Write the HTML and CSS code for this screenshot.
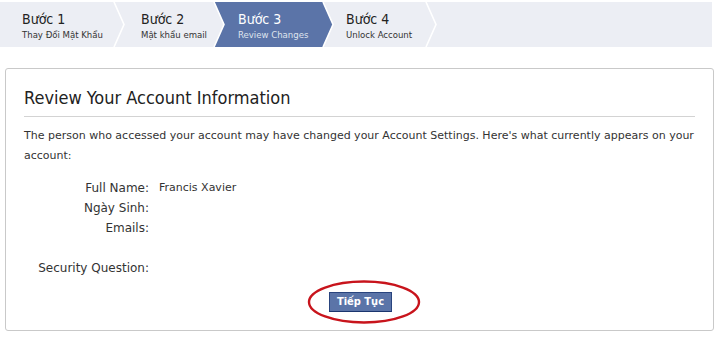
FILE: index.html
```html
<!DOCTYPE html>
<html lang="vi">
<head>
  <meta charset="UTF-8">
  <title>Review Your Account Information</title>
  <link rel="stylesheet" href="styles.css">
</head>
<body>
  <!-- Step bar -->
  <div class="steps">
    <div class="step step1">
      <div class="stepTitle">Bước 1</div>
      <div class="stepSub">Thay Đổi Mật Khẩu</div>
    </div>
    <svg class="sep" viewBox="0 0 12 45" preserveAspectRatio="none">
      <polygon class="gray" points="0,0 1,0 11,22.5 1,45 0,45"/>
      <polygon class="gray" points="1,0 12,0 12,45 1,45 11,22.5"/>
      <polyline points="1,0 11,22.5 1,45"/>
    </svg>
    <div class="step step2">
      <div class="stepTitle">Bước 2</div>
      <div class="stepSub">Mật khẩu email</div>
    </div>
    <svg class="sep" viewBox="0 0 12 45" preserveAspectRatio="none">
      <polygon class="gray" points="0,0 1,0 11,22.5 1,45 0,45"/>
      <polygon class="blue" points="1,0 12,0 12,45 1,45 11,22.5"/>
      <polyline points="1,0 11,22.5 1,45"/>
    </svg>
    <div class="step step3 active">
      <div class="stepTitle">Bước 3</div>
      <div class="stepSub">Review Changes</div>
    </div>
    <svg class="sep" viewBox="0 0 12 45" preserveAspectRatio="none">
      <polygon class="blue" points="0,0 1,0 11,22.5 1,45 0,45"/>
      <polygon class="gray" points="1,0 12,0 12,45 1,45 11,22.5"/>
      <polyline points="1,0 11,22.5 1,45"/>
    </svg>
    <div class="step step4">
      <div class="stepTitle">Bước 4</div>
      <div class="stepSub">Unlock Account</div>
    </div>
    <svg class="sep" viewBox="0 0 12 45" preserveAspectRatio="none">
      <polygon class="gray" points="0,0 1,0 11,22.5 1,45 0,45"/>
      <polygon class="gray" points="1,0 12,0 12,45 1,45 11,22.5"/>
      <polyline points="1,0 11,22.5 1,45"/>
    </svg>
    <div class="step rest"></div>
  </div>

  <!-- Review box -->
  <div class="card">
    <h2 class="cardTitle">Review Your Account Information</h2>
    <p class="intro">The person who accessed your account may have changed your Account Settings. Here's what currently appears on your account:</p>

    <div class="fields">
      <div class="label">Full Name:</div><div class="value">Francis Xavier</div>
      <div class="label">Ngày Sinh:</div><div class="value"></div>
      <div class="label">Emails:</div><div class="value"></div>
      <div class="label"></div><div class="value"></div>
      <div class="label">Security Question:</div><div class="value"></div>
    </div>

    <div class="actions">
      <button class="btn">Tiếp Tục</button>
      <svg class="circle" viewBox="0 0 114 44">
        <ellipse cx="57" cy="22" rx="55" ry="20.5"/>
      </svg>
    </div>
  </div>
</body>
</html>
```

FILE: styles.css
```css
* { box-sizing: border-box; margin: 0; padding: 0; }
html, body {
  width: 720px;
  height: 338px;
  background: #fff;
  font-family: "DejaVu Sans", sans-serif;
  color: #333;
  overflow: hidden;
}

/* Step bar */
.steps {
  display: flex;
  width: 712px;
  height: 45px;
  margin-top: 2px;
  background: #eceef4;
  font-family: "DejaVu Sans Condensed", "DejaVu Sans", sans-serif;
}
.step {
  height: 45px;
  padding-top: 9px;
  color: #222;
}
.step1 { width: 113px; padding-left: 22px; }
.step2 { width: 88px; padding-left: 16px; }
.step3 { width: 97px; padding-left: 13px; }
.step4 { width: 91px; padding-left: 12px; }
.rest { flex: 1; }
.step.active { background: #5b74a8; color: #fff; }

.stepTitle { font-size: 14px; line-height: 16px; }
.stepSub { font-size: 9.5px; line-height: 12px; margin-top: 2px; color: #333; }
.active .stepSub { color: #dfe4ee; }

.sep { width: 12px; height: 45px; flex-shrink: 0; display: block; }
.sep .gray { fill: #eceef4; }
.sep .blue { fill: #5b74a8; }
.sep polyline { fill: none; stroke: #fff; stroke-width: 1.6; }

/* Card */
.card {
  width: 709px;
  height: 263px;
  margin: 21px 0 0 5px;
  border: 1px solid #c9c9c9;
  border-radius: 3px;
  padding: 0 18px;
}
.cardTitle {
  font-family: "DejaVu Sans Condensed", "DejaVu Sans", sans-serif;
  font-size: 18px;
  font-weight: normal;
  color: #222;
  padding: 19px 0 8px;
  line-height: 20px;
  border-bottom: 1px solid #d3d3d3;
}
.intro {
  font-size: 11px;
  line-height: 20px;
  margin-top: 9px;
  color: #333;
}

.fields {
  display: grid;
  grid-template-columns: 125px 1fr;
  column-gap: 10px;
  margin-top: 12px;
  font-size: 11px;
  line-height: 20px;
}
.label { text-align: right; color: #333; height: 20px; font-size: 12px; }
.value { color: #333; height: 20px; }

.actions {
  position: relative;
  display: flex;
  justify-content: center;
  margin-top: 12px;
}
.btn {
  font-family: "DejaVu Sans Condensed", "DejaVu Sans", sans-serif;
  font-size: 11px;
  font-weight: bold;
  color: #fff;
  background: #5b74a8;
  border: 1px solid #29447e;
  border-bottom-color: #1a356e;
  padding: 3px 7px;
  line-height: 12px;
  margin-left: 2px;
  margin-top: 2px;
}
.circle {
  position: absolute;
  left: 283px;
  top: -10px;
  width: 114px;
  height: 44px;
}
.circle ellipse { fill: none; stroke: #c8141c; stroke-width: 2.4; }
```
